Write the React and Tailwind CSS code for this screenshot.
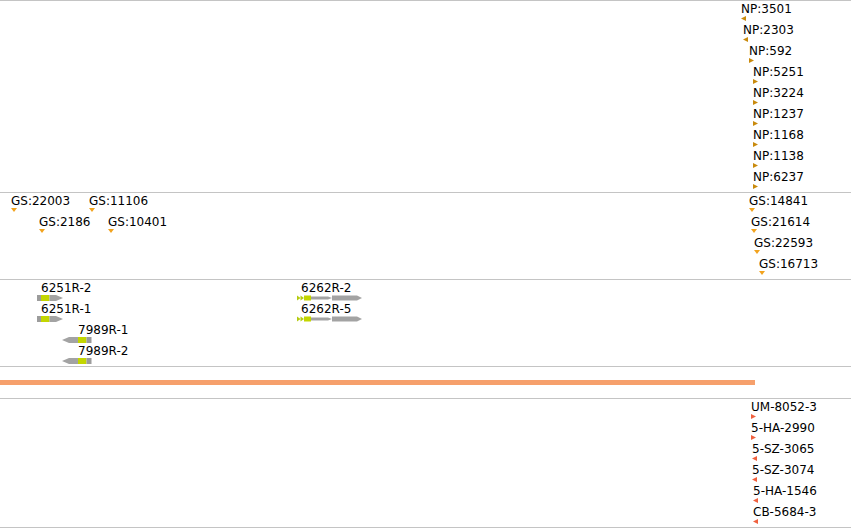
import React from "react";

const NP_COLOR = "#c98a0c";
const GS_COLOR = "#f2a31e";
const RED_COLOR = "#f0613f";

const npFeatures = [
  { label: "NP:3501", pos: "left-[741px] top-[1px]", dir: "left" },
  { label: "NP:2303", pos: "left-[743px] top-[22px]", dir: "left" },
  { label: "NP:592", pos: "left-[749px] top-[43px]", dir: "right" },
  { label: "NP:5251", pos: "left-[753px] top-[64px]", dir: "right" },
  { label: "NP:3224", pos: "left-[753px] top-[85px]", dir: "right" },
  { label: "NP:1237", pos: "left-[753px] top-[106px]", dir: "right" },
  { label: "NP:1168", pos: "left-[753px] top-[127px]", dir: "right" },
  { label: "NP:1138", pos: "left-[753px] top-[148px]", dir: "right" },
  { label: "NP:6237", pos: "left-[753px] top-[169px]", dir: "right" },
];

const gsFeatures = [
  { label: "GS:22003", pos: "left-[11px] top-[1px]" },
  { label: "GS:11106", pos: "left-[89px] top-[1px]" },
  { label: "GS:2186", pos: "left-[39px] top-[22px]" },
  { label: "GS:10401", pos: "left-[108px] top-[22px]" },
  { label: "GS:14841", pos: "left-[749px] top-[1px]" },
  { label: "GS:21614", pos: "left-[751px] top-[22px]" },
  { label: "GS:22593", pos: "left-[754px] top-[43px]" },
  { label: "GS:16713", pos: "left-[759px] top-[64px]" },
];

const sampleFeatures = [
  { label: "UM-8052-3", pos: "left-[751px] top-[1px]", dir: "right" },
  { label: "5-HA-2990", pos: "left-[751px] top-[22px]", dir: "right" },
  { label: "5-SZ-3065", pos: "left-[752px] top-[43px]", dir: "left" },
  { label: "5-SZ-3074", pos: "left-[752px] top-[64px]", dir: "left" },
  { label: "5-HA-1546", pos: "left-[753px] top-[85px]", dir: "left" },
  { label: "CB-5684-3", pos: "left-[753px] top-[106px]", dir: "left" },
];

function Marker({ dir, color }) {
  if (dir === "down") {
    return (
      <svg width="6" height="4" className="block">
        <polygon points="0,0 6,0 3,4" fill={color} />
      </svg>
    );
  }
  return (
    <svg width="5" height="5" className="block">
      <polygon
        points={dir === "left" ? "5,0 0,2.5 5,5" : "0,0 5,2.5 0,5"}
        fill={color}
      />
    </svg>
  );
}

function Feature({ label, pos, dir, color }) {
  return (
    <div className={`absolute ${pos}`}>
      <div className="text-[12px] leading-[14px] text-black whitespace-nowrap">{label}</div>
      <Marker dir={dir} color={color} />
    </div>
  );
}

function ForwardGene() {
  return (
    <svg width="26" height="6" className="block">
      <rect x="0" y="0" width="4" height="6" fill="#9c9c9c" />
      <rect x="4" y="0" width="8.5" height="6" fill="#c3d600" />
      <polygon points="12.5,0 19,0 26,3 19,6 12.5,6" fill="#a3a3a3" />
    </svg>
  );
}

function ReverseGene() {
  return (
    <svg width="30" height="6" className="block">
      <polygon points="0,3 7,0 16,0 16,6 7,6" fill="#a3a3a3" />
      <rect x="16" y="0" width="8.5" height="6" fill="#c3d600" />
      <rect x="24.5" y="0" width="5" height="6" fill="#9c9c9c" />
    </svg>
  );
}

function LongGene() {
  return (
    <svg width="66" height="6" className="block">
      <polygon points="0,0.5 3.5,3 0,5.5" fill="#b5cc10" />
      <polygon points="3.5,0.5 7,3 3.5,5.5" fill="#b5cc10" />
      <rect x="7" y="0.5" width="7" height="5" fill="#c3d600" />
      <polygon points="14,1.5 31,1.5 35,3 31,4.5 14,4.5" fill="#a3a3a3" />
      <polygon points="35,0.5 60,0.5 65,3 60,5.5 35,5.5" fill="#a3a3a3" />
    </svg>
  );
}

function GeneFeature({ label, pos, textPad, children }) {
  return (
    <div className={`absolute ${pos}`}>
      <div className={`text-[12px] leading-[14px] text-black whitespace-nowrap ${textPad}`}>{label}</div>
      {children}
    </div>
  );
}

export default function App() {
  return (
    <div
      className="w-[851px] h-[528px] bg-white flex flex-col overflow-hidden"
      style={{ fontFamily: '"DejaVu Sans", Verdana, sans-serif' }}
    >
      <div className="relative h-[192px] border-t border-[#c4c4c4]">
        {npFeatures.map((f) => (
          <Feature key={f.label} {...f} color={NP_COLOR} />
        ))}
      </div>

      <div className="relative h-[87px] border-t border-[#c4c4c4]">
        {gsFeatures.map((f) => (
          <Feature key={f.label} {...f} dir="down" color={GS_COLOR} />
        ))}
      </div>

      <div className="relative h-[87px] border-t border-[#c4c4c4]">
        <GeneFeature label="6251R-2" pos="left-[37px] top-[1px]" textPad="pl-[4px]">
          <ForwardGene />
        </GeneFeature>
        <GeneFeature label="6251R-1" pos="left-[37px] top-[22px]" textPad="pl-[4px]">
          <ForwardGene />
        </GeneFeature>
        <GeneFeature label="7989R-1" pos="left-[62px] top-[43px]" textPad="pl-[16px]">
          <ReverseGene />
        </GeneFeature>
        <GeneFeature label="7989R-2" pos="left-[62px] top-[64px]" textPad="pl-[16px]">
          <ReverseGene />
        </GeneFeature>
        <GeneFeature label="6262R-2" pos="left-[297px] top-[1px]" textPad="pl-[4px]">
          <LongGene />
        </GeneFeature>
        <GeneFeature label="6262R-5" pos="left-[297px] top-[22px]" textPad="pl-[4px]">
          <LongGene />
        </GeneFeature>
      </div>

      <div className="h-[32px] border-t border-[#c4c4c4] pt-[13px]">
        <div className="w-[755px] h-[5px] bg-[#f6a06c]" />
      </div>

      <div className="relative h-[130px] border-t border-b border-[#c4c4c4]">
        {sampleFeatures.map((f) => (
          <Feature key={f.label} {...f} color={RED_COLOR} />
        ))}
      </div>
    </div>
  );
}
